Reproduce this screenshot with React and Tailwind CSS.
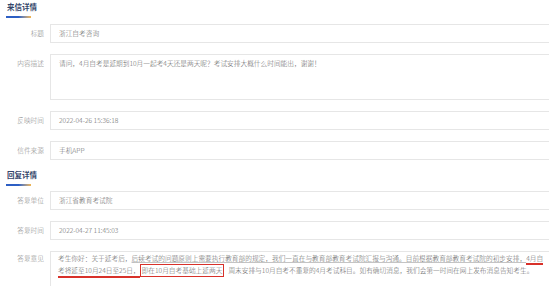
import React from 'react';

const font = { fontFamily: '"Noto Sans CJK SC", "Noto Sans", sans-serif' };

const Header = ({ title, className }) => (
  <div className={className}>
    <div className="ml-[7px] h-[10px] text-[7.5px] font-bold leading-[10px] text-[#34466a]">{title}</div>
    <div className="ml-[6px] mt-[4px] h-[2px] w-[25px] bg-gradient-to-r from-[#2d5fc4] via-[#2d5fc4] to-[#f2b54a]" />
  </div>
);

const Row = ({ label, children, className = '' }) => (
  <div className={`flex items-center ${className}`}>
    <div className="w-[44px] shrink-0 text-right text-[6.7px] font-light text-[#8a8a8a]">{label}</div>
    <div className="ml-[6px] flex h-[19px] flex-1 items-center border border-r-0 border-[#e6e6e6] pl-[8px] text-[6.7px] font-light text-[#666]">
      {children}
    </div>
  </div>
);

export default function App() {
  return (
    <div className="h-[286px] w-[549px] overflow-hidden bg-white pt-[2px]" style={font}>
      <Header title="来信详情" />

      <Row label="标题" className="mt-[6px]">浙江自考咨询</Row>

      <div className="mt-[11px] flex items-start">
        <div className="w-[44px] shrink-0 pt-[4px] text-right text-[6.7px] font-light leading-[11px] text-[#8a8a8a]">内容描述</div>
        <div className="ml-[6px] h-[46px] flex-1 border border-r-0 border-[#e6e6e6] pl-[8px] pt-[3px] text-[6.7px] font-light leading-[11px] text-[#666]">
          请问，4月自考是延期到10月一起考4天还是两天呢？考试安排大概什么时间能出，谢谢！
        </div>
      </div>

      <Row label="反映时间" className="mt-[11px]">2022-04-26 15:36:18</Row>
      <Row label="信件来源" className="mt-[11px]">手机APP</Row>

      <Header title="回复详情" className="mt-[10px]" />

      <Row label="答复单位" className="mt-[5px]">浙江省教育考试院</Row>
      <Row label="答复时间" className="mt-[11px]">2022-04-27 11:45:03</Row>

      <div className="mt-[11px] flex items-start">
        <div className="w-[44px] shrink-0 pt-[2px] text-right text-[6.7px] font-light leading-[11px] text-[#8a8a8a]">答复意见</div>
        <div className="ml-[6px] h-[40px] flex-1 border border-b-0 border-r-0 border-[#e6e6e6] pl-[7px] pt-[1px] text-[6.7px] font-light leading-[11px] text-[#666]">
          <div className="whitespace-nowrap">
            考生你好：关于延考后，
            <span className="underline decoration-[#c4c4c4] underline-offset-[1px]">
              后续考试的问题原则上需要执行教育部的规定，我们一直在与教育部教育考试院汇报与沟通。目前根据教育部教育考试院的初步安排，
            </span>
            <span className="border-b-2 border-[#d8312a]">4月自</span>
          </div>
          <div className="whitespace-nowrap">
            <span className="border-b-2 border-[#d8312a] pb-[1px]">考将延至10月24日至25日，</span>
            <span className="inline-block border-[1.5px] border-[#d8312a] px-[1px] leading-[11px]">即在10月自考基础上延两天</span>
            <span className="ml-[4px]">周末安排与10月自考不重复的4月考试科目。如有确切消息，我们会第一时间在网上发布消息告知考生。</span>
          </div>
        </div>
      </div>
    </div>
  );
}
